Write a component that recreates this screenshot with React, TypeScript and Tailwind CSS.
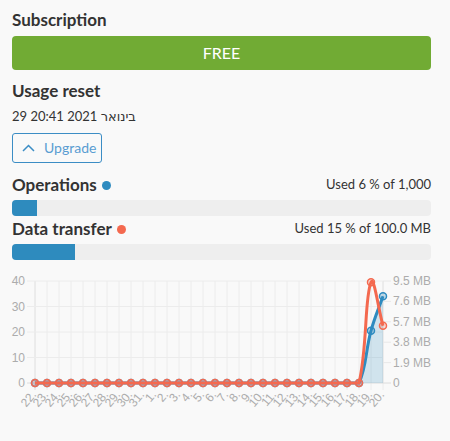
import React from 'react';

const FONT = "font-['Lato','Noto_Sans','DejaVu_Sans',sans-serif]";

// chart data: 22. Dec .. 20. Jan
const labels = [
  ...Array.from({ length: 10 }, (_, i) => `${22 + i}.`),
  ...Array.from({ length: 20 }, (_, i) => `${i + 1}.`),
];
const operations = [...Array(28).fill(0), 20.5, 34];
const transferMb = [...Array(28).fill(0), 9.38, 5.33];

const X0 = 35;
const STEP = 12;
const TOP = 281;
const BOTTOM = 383;
const xAt = (i: number) => X0 + STEP * i;
const yLeft = (v: number) => BOTTOM - v * ((BOTTOM - TOP) / 40);
const yRight = (v: number) => BOTTOM - v * ((BOTTOM - TOP) / 9.5);

type Pt = { x: number; y: number };

// spline like chart.js (tension 0.4), control points capped to the chart area
const splinePath = (pts: Pt[], tension = 0.4) => {
  const cap = (y: number) => Math.min(BOTTOM, Math.max(TOP - 6, y));
  const ctrl = pts.map((p, i) => {
    const p0 = pts[i - 1] || p;
    const p2 = pts[i + 1] || p;
    const d01 = Math.hypot(p.x - p0.x, p.y - p0.y);
    const d12 = Math.hypot(p2.x - p.x, p2.y - p.y);
    const sum = d01 + d12 || 1;
    const fa = (tension * d01) / sum;
    const fb = (tension * d12) / sum;
    return {
      prev: { x: p.x - fa * (p2.x - p0.x), y: cap(p.y - fa * (p2.y - p0.y)) },
      next: { x: p.x + fb * (p2.x - p0.x), y: cap(p.y + fb * (p2.y - p0.y)) },
    };
  });
  let d = `M${pts[0].x},${pts[0].y}`;
  for (let i = 1; i < pts.length; i++) {
    const a = ctrl[i - 1].next;
    const b = ctrl[i].prev;
    d += ` C${a.x},${a.y} ${b.x},${b.y} ${pts[i].x},${pts[i].y}`;
  }
  return d;
};

const UsageChart: React.FC = () => {
  const opsPts = operations.map((v, i) => ({ x: xAt(i), y: yLeft(v) }));
  const trPts = transferMb.map((v, i) => ({ x: xAt(i), y: yRight(v) }));
  const opsLine = splinePath(opsPts);
  const trLine = splinePath(trPts);
  const opsArea = `${opsLine} L${xAt(29)},${BOTTOM} L${xAt(0)},${BOTTOM} Z`;

  const leftTicks = [40, 30, 20, 10, 0];
  const rightTicks = ['9.5 MB', '7.6 MB', '5.7 MB', '3.8 MB', '1.9 MB', '0'];

  return (
    <svg width={450} height={171} viewBox="0 270 450 171" className="block -ml-3">
      {/* vertical grid */}
      {labels.map((_, i) => (
        <line key={`v${i}`} x1={xAt(i)} y1={TOP} x2={xAt(i)} y2={390} stroke={i === 0 ? '#dedede' : '#ececec'} strokeWidth={1} />
      ))}
      <line x1={383} y1={TOP} x2={383} y2={BOTTOM} stroke="#e4e4e4" />
      {/* horizontal grid / left ticks */}
      {leftTicks.map(v => (
        <line key={`h${v}`} x1={27} y1={yLeft(v)} x2={383} y2={yLeft(v)} stroke={v === 0 ? '#dcdcdc' : '#ececec'} />
      ))}
      {rightTicks.map((_, i) => {
        const y = TOP + ((BOTTOM - TOP) / 5) * i;
        return <line key={`r${i}`} x1={383} y1={y} x2={391} y2={y} stroke={i === 5 ? '#dcdcdc' : '#e8e8e8'} />;
      })}

      {/* axis labels */}
      <g fontFamily="'Liberation Sans', Arial, sans-serif" fontSize={12} fill="#acacac">
        {leftTicks.map(v => (
          <text key={`lt${v}`} x={25} y={yLeft(v) + 4} textAnchor="end">{v}</text>
        ))}
        {rightTicks.map((t, i) => (
          <text key={`rt${i}`} x={393} y={TOP + ((BOTTOM - TOP) / 5) * i + 4}>{t}</text>
        ))}
        {labels.map((l, i) => (
          <text
            key={`xl${i}`}
            x={xAt(i) + 2}
            y={395}
            textAnchor="end"
            transform={`rotate(-50 ${xAt(i) + 2} 395)`}
          >
            {l}
          </text>
        ))}
      </g>

      {/* operations (blue) */}
      <path d={opsArea} fill="rgba(46,139,190,0.2)" />
      <path d={opsLine} fill="none" stroke="#2e8bc0" strokeWidth={3} />
      {opsPts.map((p, i) => (
        <circle key={`op${i}`} cx={p.x} cy={p.y} r={3.5} fill="rgba(46,139,190,0.25)" stroke="#2e8bc0" strokeWidth={1.5} />
      ))}

      {/* data transfer (red) */}
      <path d={trLine} fill="none" stroke="#f4694f" strokeWidth={3} />
      {trPts.map((p, i) => (
        <circle key={`tr${i}`} cx={p.x} cy={p.y} r={3.5} fill="rgba(244,105,79,0.2)" stroke="#f4694f" strokeWidth={1.5} />
      ))}
    </svg>
  );
};

const UsageBar: React.FC<{ percent: number }> = ({ percent }) => (
  <div className="mt-1 h-4 w-full overflow-hidden rounded bg-[#eeeeee]">
    <div className="h-full bg-[#2e8bbe]" style={{ width: `${percent}%` }} />
  </div>
);

const App: React.FC = () => {
  return (
    <div className={`w-[450px] h-[441px] overflow-hidden bg-[#f9f9f9] pl-3 pr-[19px] pt-[9px] text-[#333] ${FONT}`}>
      <h2 className="text-[17px] font-bold leading-[22px]">Subscription</h2>
      <div className="mt-[5px] flex h-[34px] items-center justify-center rounded bg-[#71ab34] text-base text-white">
        FREE
      </div>

      <h2 className="mt-[10px] text-[17px] font-bold leading-[22px]">Usage reset</h2>
      <div className="mt-[4px] text-[13px] leading-5">29 בינואר 2021 20:41</div>

      <button className="mt-[7px] flex h-[30px] w-[90px] items-center gap-[9px] rounded-[3px] border border-[#3b8dc5] pl-[9px] text-sm text-[#5a9dd2]">
        <svg width="13" height="8" viewBox="0 0 13 8" fill="none">
          <path d="M1 7 L6.5 1.5 L12 7" stroke="#3b8dc5" strokeWidth="1.5" />
        </svg>
        Upgrade
      </button>

      {/* 사용량 */}
      <div className="mt-[11px] flex h-[22px] items-center justify-between">
        <div className="flex items-center gap-[5px]">
          <span className="text-[17px] font-bold">Operations</span>
          <span className="h-[9px] w-[9px] rounded-full bg-[#2e8bc0]" />
        </div>
        <span className="text-[13px]">Used 6 % of 1,000</span>
      </div>
      <UsageBar percent={6} />

      <div className="mt-[2px] flex h-[22px] items-center justify-between">
        <div className="flex items-center gap-[5px]">
          <span className="text-[17px] font-bold">Data transfer</span>
          <span className="h-[9px] w-[9px] rounded-full bg-[#f4694f]" />
        </div>
        <span className="text-[13px]">Used 15 % of 100.0 MB</span>
      </div>
      <UsageBar percent={15} />

      <div className="mt-[10px]">
        <UsageChart />
      </div>
    </div>
  );
};

export default App;
